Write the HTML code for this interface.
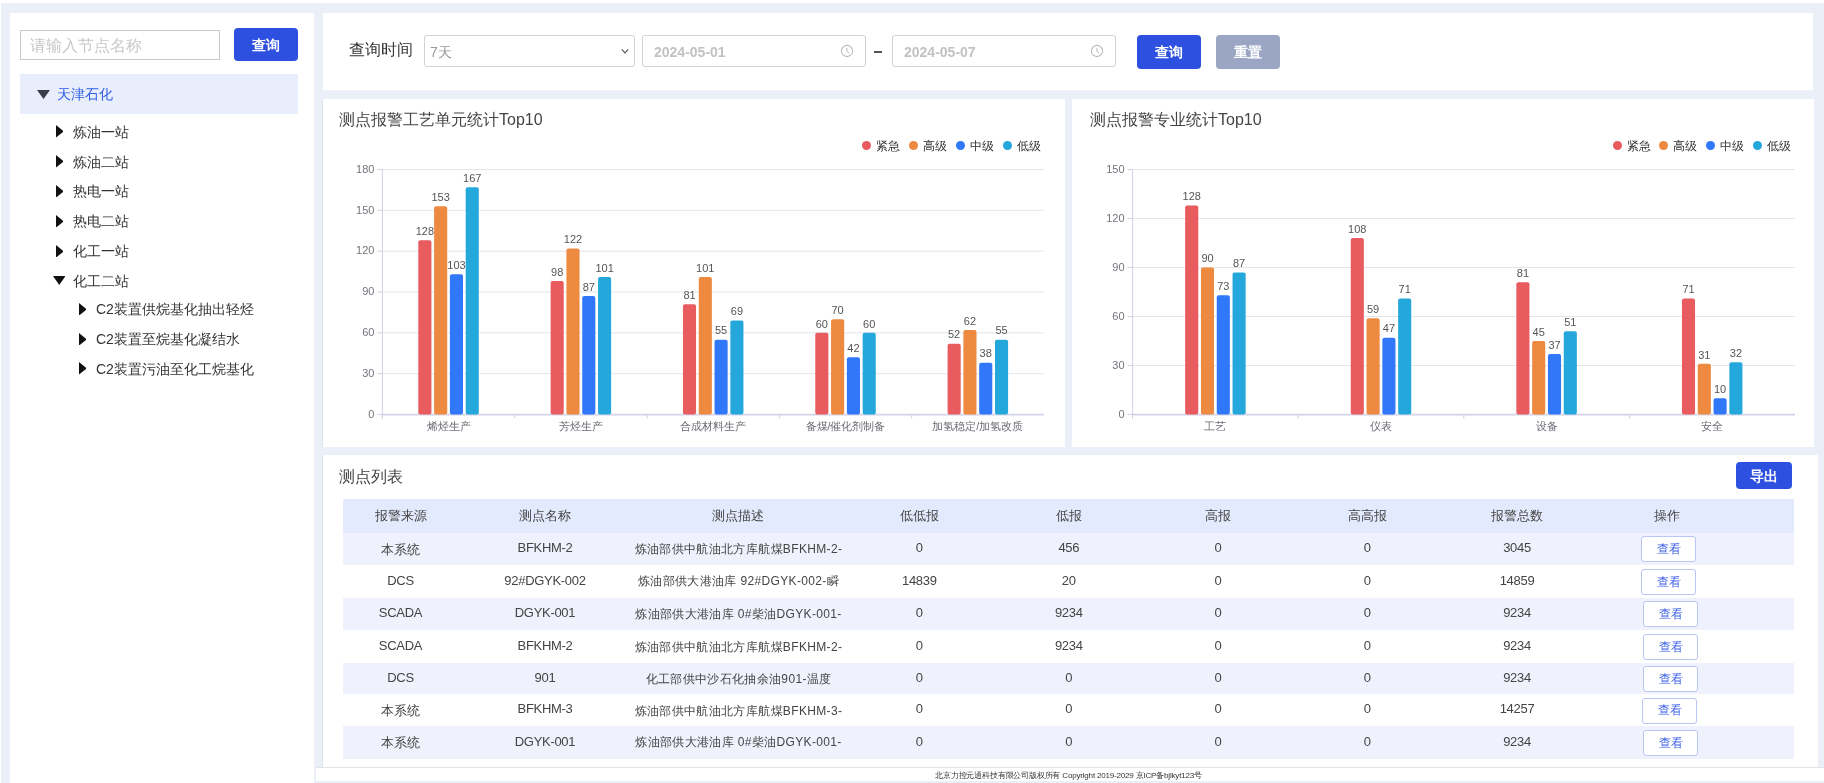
<!DOCTYPE html>
<html><head><meta charset="utf-8"><style>
html,body{margin:0;padding:0;}
body{width:1824px;height:783px;overflow:hidden;position:relative;background:#eaeff8;font-family:"Liberation Sans", sans-serif;}
svg text{font-family:"Liberation Sans", sans-serif;}
</style></head><body><div style="position:absolute;left:0;top:0;width:1824px;height:783px;will-change:transform">
<div style="position:absolute;left:0px;top:0px;width:1824px;height:3px;background:#fff"></div><div style="position:absolute;left:0px;top:0px;width:1px;height:783px;background:#fff"></div><div style="position:absolute;left:322px;top:99px;width:1px;height:348px;background:#e0e5ed"></div><div style="position:absolute;left:322px;top:454.5px;width:1px;height:312.5px;background:#e0e5ed"></div><div style="position:absolute;left:10px;top:13px;width:304px;height:770px;background:#fff"></div><div style="position:absolute;left:20px;top:30px;width:200px;height:30px;border:1px solid #c9c9c9;box-sizing:border-box;background:#fff"></div><div style="position:absolute;left:30px;top:34.80px;font-size:16px;line-height:22.4px;color:#c8c8c8;white-space:nowrap;">请输入节点名称</div><div style="position:absolute;left:234px;top:28px;width:64px;height:33px;background:#2d50e0;border-radius:4px"></div><div style="position:absolute;left:-34px;top:35.70px;width:600px;text-align:center;font-size:14px;line-height:19.599999999999998px;color:#fff;white-space:nowrap;font-weight:bold">查询</div><div style="position:absolute;left:20px;top:74px;width:278px;height:40px;background:#e8eefb"></div><svg style="position:absolute;left:37px;top:90px" width="13" height="9"><polygon points="0,0 13,0 6.5,9" fill="#3a3d45"/></svg><div style="position:absolute;left:56.7px;top:85.20px;font-size:14px;line-height:19.599999999999998px;color:#2f5ce6;white-space:nowrap;">天津石化</div><svg style="position:absolute;left:55.7px;top:125.2px" width="7.8" height="12.6"><polygon points="0,0 7.8,6.3 0,12.6" fill="#111"/></svg><div style="position:absolute;left:72.8px;top:122.70px;font-size:14px;line-height:19.599999999999998px;color:#333;white-space:nowrap;">炼油一站</div><svg style="position:absolute;left:55.7px;top:155.04999999999998px" width="7.8" height="12.6"><polygon points="0,0 7.8,6.3 0,12.6" fill="#111"/></svg><div style="position:absolute;left:72.8px;top:152.55px;font-size:14px;line-height:19.599999999999998px;color:#333;white-space:nowrap;">炼油二站</div><svg style="position:absolute;left:55.7px;top:184.89999999999998px" width="7.8" height="12.6"><polygon points="0,0 7.8,6.3 0,12.6" fill="#111"/></svg><div style="position:absolute;left:72.8px;top:182.40px;font-size:14px;line-height:19.599999999999998px;color:#333;white-space:nowrap;">热电一站</div><svg style="position:absolute;left:55.7px;top:214.75px" width="7.8" height="12.6"><polygon points="0,0 7.8,6.3 0,12.6" fill="#111"/></svg><div style="position:absolute;left:72.8px;top:212.25px;font-size:14px;line-height:19.599999999999998px;color:#333;white-space:nowrap;">热电二站</div><svg style="position:absolute;left:55.7px;top:244.6px" width="7.8" height="12.6"><polygon points="0,0 7.8,6.3 0,12.6" fill="#111"/></svg><div style="position:absolute;left:72.8px;top:242.10px;font-size:14px;line-height:19.599999999999998px;color:#333;white-space:nowrap;">化工一站</div><svg style="position:absolute;left:52.5px;top:276.25px" width="12.5" height="9"><polygon points="0,0 12.5,0 6.25,9" fill="#111"/></svg><div style="position:absolute;left:72.8px;top:271.95px;font-size:14px;line-height:19.599999999999998px;color:#333;white-space:nowrap;">化工二站</div><svg style="position:absolute;left:78.7px;top:302.9px" width="7.8" height="12.6"><polygon points="0,0 7.8,6.3 0,12.6" fill="#111"/></svg><div style="position:absolute;left:96px;top:300.40px;font-size:14px;line-height:19.599999999999998px;color:#333;white-space:nowrap;">C2装置供烷基化抽出轻烃</div><svg style="position:absolute;left:78.7px;top:332.5px" width="7.8" height="12.6"><polygon points="0,0 7.8,6.3 0,12.6" fill="#111"/></svg><div style="position:absolute;left:96px;top:330.00px;font-size:14px;line-height:19.599999999999998px;color:#333;white-space:nowrap;">C2装置至烷基化凝结水</div><svg style="position:absolute;left:78.7px;top:362.09999999999997px" width="7.8" height="12.6"><polygon points="0,0 7.8,6.3 0,12.6" fill="#111"/></svg><div style="position:absolute;left:96px;top:359.60px;font-size:14px;line-height:19.599999999999998px;color:#333;white-space:nowrap;">C2装置污油至化工烷基化</div><div style="position:absolute;left:323px;top:13px;width:1490px;height:77px;background:#fff"></div><div style="position:absolute;left:349px;top:39.30px;font-size:16px;line-height:22.4px;color:#333;white-space:nowrap;">查询时间</div><div style="position:absolute;left:424px;top:35px;width:211px;height:32px;border:1px solid #d2d2d2;border-radius:3px;box-sizing:border-box;background:#fff"></div><div style="position:absolute;left:430px;top:42.70px;font-size:14px;line-height:19.599999999999998px;color:#9a9a9a;white-space:nowrap;">7天</div><svg style="position:absolute;left:621px;top:48px" width="8" height="7"><polyline points="0.8,1.4 4,4.8 7.2,1.4" fill="none" stroke="#555" stroke-width="1.2"/></svg><div style="position:absolute;left:642px;top:35px;width:224px;height:32px;border:1px solid #d2d2d2;border-radius:3px;box-sizing:border-box;background:#fff"></div><div style="position:absolute;left:654px;top:42.50px;font-size:14px;line-height:19.599999999999998px;color:#c2c2c2;white-space:nowrap;font-weight:bold">2024-05-01</div><svg style="position:absolute;left:840.4px;top:44.3px" width="14" height="14"><circle cx="7" cy="7" r="5.6" fill="none" stroke="#bdbdbd" stroke-width="1.1"/><polyline points="6.9,3.8 6.9,7.2 9.3,9.2" fill="none" stroke="#bdbdbd" stroke-width="1"/></svg><div style="position:absolute;left:874px;top:51px;width:8px;height:2px;background:#555"></div><div style="position:absolute;left:892px;top:35px;width:224px;height:32px;border:1px solid #d2d2d2;border-radius:3px;box-sizing:border-box;background:#fff"></div><div style="position:absolute;left:904px;top:42.50px;font-size:14px;line-height:19.599999999999998px;color:#c2c2c2;white-space:nowrap;font-weight:bold">2024-05-07</div><svg style="position:absolute;left:1090.3px;top:44.3px" width="14" height="14"><circle cx="7" cy="7" r="5.6" fill="none" stroke="#bdbdbd" stroke-width="1.1"/><polyline points="6.9,3.8 6.9,7.2 9.3,9.2" fill="none" stroke="#bdbdbd" stroke-width="1"/></svg><div style="position:absolute;left:1137px;top:35px;width:64px;height:34px;background:#2d50e0;border-radius:4px"></div><div style="position:absolute;left:869px;top:43.20px;width:600px;text-align:center;font-size:14px;line-height:19.599999999999998px;color:#fff;white-space:nowrap;font-weight:bold">查询</div><div style="position:absolute;left:1216px;top:35px;width:64px;height:34px;background:#9aa6c3;border-radius:4px"></div><div style="position:absolute;left:948px;top:43.20px;width:600px;text-align:center;font-size:14px;line-height:19.599999999999998px;color:#fff;white-space:nowrap;font-weight:bold">重置</div><div style="position:absolute;left:323px;top:99px;width:742px;height:348px;background:#fff"></div><div style="position:absolute;left:339px;top:109.30px;font-size:16px;line-height:22.4px;color:#444;white-space:nowrap;">测点报警工艺单元统计Top10</div><div style="position:absolute;left:862.4px;top:140.5px;width:9px;height:9px;border-radius:50%;background:#e85b5f"></div><div style="position:absolute;left:876.4px;top:137.80px;font-size:12px;line-height:16.799999999999997px;color:#333;white-space:nowrap;">紧急</div><div style="position:absolute;left:909.1px;top:140.5px;width:9px;height:9px;border-radius:50%;background:#ee8a3f"></div><div style="position:absolute;left:923.1px;top:137.80px;font-size:12px;line-height:16.799999999999997px;color:#333;white-space:nowrap;">高级</div><div style="position:absolute;left:955.8px;top:140.5px;width:9px;height:9px;border-radius:50%;background:#3177fa"></div><div style="position:absolute;left:969.8px;top:137.80px;font-size:12px;line-height:16.799999999999997px;color:#333;white-space:nowrap;">中级</div><div style="position:absolute;left:1002.5px;top:140.5px;width:9px;height:9px;border-radius:50%;background:#24a8dc"></div><div style="position:absolute;left:1016.5px;top:137.80px;font-size:12px;line-height:16.799999999999997px;color:#333;white-space:nowrap;">低级</div><svg style="position:absolute;left:0;top:0" width="1824" height="783"><line x1="377.4" y1="414.50" x2="382.4" y2="414.50" stroke="#cfd0e6" stroke-width="1"/><text x="374.4" y="417.80" text-anchor="end" font-size="11" fill="#74757d">0</text><line x1="382.4" y1="373.67" x2="1044" y2="373.67" stroke="#e4e5ea" stroke-width="1"/><line x1="377.4" y1="373.67" x2="382.4" y2="373.67" stroke="#cfd0e6" stroke-width="1"/><text x="374.4" y="376.97" text-anchor="end" font-size="11" fill="#74757d">30</text><line x1="382.4" y1="332.83" x2="1044" y2="332.83" stroke="#e4e5ea" stroke-width="1"/><line x1="377.4" y1="332.83" x2="382.4" y2="332.83" stroke="#cfd0e6" stroke-width="1"/><text x="374.4" y="336.13" text-anchor="end" font-size="11" fill="#74757d">60</text><line x1="382.4" y1="292.00" x2="1044" y2="292.00" stroke="#e4e5ea" stroke-width="1"/><line x1="377.4" y1="292.00" x2="382.4" y2="292.00" stroke="#cfd0e6" stroke-width="1"/><text x="374.4" y="295.30" text-anchor="end" font-size="11" fill="#74757d">90</text><line x1="382.4" y1="251.17" x2="1044" y2="251.17" stroke="#e4e5ea" stroke-width="1"/><line x1="377.4" y1="251.17" x2="382.4" y2="251.17" stroke="#cfd0e6" stroke-width="1"/><text x="374.4" y="254.47" text-anchor="end" font-size="11" fill="#74757d">120</text><line x1="382.4" y1="210.33" x2="1044" y2="210.33" stroke="#e4e5ea" stroke-width="1"/><line x1="377.4" y1="210.33" x2="382.4" y2="210.33" stroke="#cfd0e6" stroke-width="1"/><text x="374.4" y="213.63" text-anchor="end" font-size="11" fill="#74757d">150</text><line x1="382.4" y1="169.50" x2="1044" y2="169.50" stroke="#e4e5ea" stroke-width="1"/><line x1="377.4" y1="169.50" x2="382.4" y2="169.50" stroke="#cfd0e6" stroke-width="1"/><text x="374.4" y="172.80" text-anchor="end" font-size="11" fill="#74757d">180</text><line x1="382.4" y1="169.5" x2="382.4" y2="418.5" stroke="#cfd0e6" stroke-width="1"/><line x1="382.4" y1="414.6" x2="1044" y2="414.6" stroke="#d2d3e6" stroke-width="1.6"/><line x1="382.40" y1="414.5" x2="382.40" y2="418.5" stroke="#cfd0e6" stroke-width="1"/><line x1="514.72" y1="414.5" x2="514.72" y2="418.5" stroke="#cfd0e6" stroke-width="1"/><line x1="647.04" y1="414.5" x2="647.04" y2="418.5" stroke="#cfd0e6" stroke-width="1"/><line x1="779.36" y1="414.5" x2="779.36" y2="418.5" stroke="#cfd0e6" stroke-width="1"/><line x1="911.68" y1="414.5" x2="911.68" y2="418.5" stroke="#cfd0e6" stroke-width="1"/><text x="448.56" y="430.3" text-anchor="middle" font-size="10.6" fill="#6a6b74">烯烃生产</text><rect x="418.31" y="240.28" width="13.1" height="174.22" rx="2" ry="2" fill="#e85b5f"/><text x="424.86" y="234.98" text-anchor="middle" font-size="11" fill="#555">128</text><rect x="434.11" y="206.25" width="13.1" height="208.25" rx="2" ry="2" fill="#ee8a3f"/><text x="440.66" y="200.95" text-anchor="middle" font-size="11" fill="#555">153</text><rect x="449.91" y="274.31" width="13.1" height="140.19" rx="2" ry="2" fill="#3177fa"/><text x="456.46" y="269.01" text-anchor="middle" font-size="11" fill="#555">103</text><rect x="465.71" y="187.19" width="13.1" height="227.31" rx="2" ry="2" fill="#24a8dc"/><text x="472.26" y="181.89" text-anchor="middle" font-size="11" fill="#555">167</text><text x="580.88" y="430.3" text-anchor="middle" font-size="10.6" fill="#6a6b74">芳烃生产</text><rect x="550.63" y="281.11" width="13.1" height="133.39" rx="2" ry="2" fill="#e85b5f"/><text x="557.18" y="275.81" text-anchor="middle" font-size="11" fill="#555">98</text><rect x="566.43" y="248.44" width="13.1" height="166.06" rx="2" ry="2" fill="#ee8a3f"/><text x="572.98" y="243.14" text-anchor="middle" font-size="11" fill="#555">122</text><rect x="582.23" y="296.08" width="13.1" height="118.42" rx="2" ry="2" fill="#3177fa"/><text x="588.78" y="290.78" text-anchor="middle" font-size="11" fill="#555">87</text><rect x="598.03" y="277.03" width="13.1" height="137.47" rx="2" ry="2" fill="#24a8dc"/><text x="604.58" y="271.73" text-anchor="middle" font-size="11" fill="#555">101</text><text x="713.20" y="430.3" text-anchor="middle" font-size="10.6" fill="#6a6b74">合成材料生产</text><rect x="682.95" y="304.25" width="13.1" height="110.25" rx="2" ry="2" fill="#e85b5f"/><text x="689.50" y="298.95" text-anchor="middle" font-size="11" fill="#555">81</text><rect x="698.75" y="277.03" width="13.1" height="137.47" rx="2" ry="2" fill="#ee8a3f"/><text x="705.30" y="271.73" text-anchor="middle" font-size="11" fill="#555">101</text><rect x="714.55" y="339.64" width="13.1" height="74.86" rx="2" ry="2" fill="#3177fa"/><text x="721.10" y="334.34" text-anchor="middle" font-size="11" fill="#555">55</text><rect x="730.35" y="320.58" width="13.1" height="93.92" rx="2" ry="2" fill="#24a8dc"/><text x="736.90" y="315.28" text-anchor="middle" font-size="11" fill="#555">69</text><text x="845.52" y="430.3" text-anchor="middle" font-size="10.6" fill="#6a6b74">备煤/催化剂制备</text><rect x="815.27" y="332.83" width="13.1" height="81.67" rx="2" ry="2" fill="#e85b5f"/><text x="821.82" y="327.53" text-anchor="middle" font-size="11" fill="#555">60</text><rect x="831.07" y="319.22" width="13.1" height="95.28" rx="2" ry="2" fill="#ee8a3f"/><text x="837.62" y="313.92" text-anchor="middle" font-size="11" fill="#555">70</text><rect x="846.87" y="357.33" width="13.1" height="57.17" rx="2" ry="2" fill="#3177fa"/><text x="853.42" y="352.03" text-anchor="middle" font-size="11" fill="#555">42</text><rect x="862.67" y="332.83" width="13.1" height="81.67" rx="2" ry="2" fill="#24a8dc"/><text x="869.22" y="327.53" text-anchor="middle" font-size="11" fill="#555">60</text><text x="977.84" y="430.3" text-anchor="middle" font-size="10.6" fill="#6a6b74">加氢稳定/加氢改质</text><rect x="947.59" y="343.72" width="13.1" height="70.78" rx="2" ry="2" fill="#e85b5f"/><text x="954.14" y="338.42" text-anchor="middle" font-size="11" fill="#555">52</text><rect x="963.39" y="330.11" width="13.1" height="84.39" rx="2" ry="2" fill="#ee8a3f"/><text x="969.94" y="324.81" text-anchor="middle" font-size="11" fill="#555">62</text><rect x="979.19" y="362.78" width="13.1" height="51.72" rx="2" ry="2" fill="#3177fa"/><text x="985.74" y="357.48" text-anchor="middle" font-size="11" fill="#555">38</text><rect x="994.99" y="339.64" width="13.1" height="74.86" rx="2" ry="2" fill="#24a8dc"/><text x="1001.54" y="334.34" text-anchor="middle" font-size="11" fill="#555">55</text></svg><div style="position:absolute;left:1072px;top:99px;width:742px;height:348px;background:#fff"></div><div style="position:absolute;left:1090px;top:109.30px;font-size:16px;line-height:22.4px;color:#444;white-space:nowrap;">测点报警专业统计Top10</div><div style="position:absolute;left:1612.5px;top:140.5px;width:9px;height:9px;border-radius:50%;background:#e85b5f"></div><div style="position:absolute;left:1626.5px;top:137.80px;font-size:12px;line-height:16.799999999999997px;color:#333;white-space:nowrap;">紧急</div><div style="position:absolute;left:1659.2px;top:140.5px;width:9px;height:9px;border-radius:50%;background:#ee8a3f"></div><div style="position:absolute;left:1673.2px;top:137.80px;font-size:12px;line-height:16.799999999999997px;color:#333;white-space:nowrap;">高级</div><div style="position:absolute;left:1705.9px;top:140.5px;width:9px;height:9px;border-radius:50%;background:#3177fa"></div><div style="position:absolute;left:1719.9px;top:137.80px;font-size:12px;line-height:16.799999999999997px;color:#333;white-space:nowrap;">中级</div><div style="position:absolute;left:1752.6px;top:140.5px;width:9px;height:9px;border-radius:50%;background:#24a8dc"></div><div style="position:absolute;left:1766.6px;top:137.80px;font-size:12px;line-height:16.799999999999997px;color:#333;white-space:nowrap;">低级</div><svg style="position:absolute;left:0;top:0" width="1824" height="783"><line x1="1127.6" y1="414.50" x2="1132.6" y2="414.50" stroke="#cfd0e6" stroke-width="1"/><text x="1124.6" y="417.80" text-anchor="end" font-size="11" fill="#74757d">0</text><line x1="1132.6" y1="365.50" x2="1795" y2="365.50" stroke="#e4e5ea" stroke-width="1"/><line x1="1127.6" y1="365.50" x2="1132.6" y2="365.50" stroke="#cfd0e6" stroke-width="1"/><text x="1124.6" y="368.80" text-anchor="end" font-size="11" fill="#74757d">30</text><line x1="1132.6" y1="316.50" x2="1795" y2="316.50" stroke="#e4e5ea" stroke-width="1"/><line x1="1127.6" y1="316.50" x2="1132.6" y2="316.50" stroke="#cfd0e6" stroke-width="1"/><text x="1124.6" y="319.80" text-anchor="end" font-size="11" fill="#74757d">60</text><line x1="1132.6" y1="267.50" x2="1795" y2="267.50" stroke="#e4e5ea" stroke-width="1"/><line x1="1127.6" y1="267.50" x2="1132.6" y2="267.50" stroke="#cfd0e6" stroke-width="1"/><text x="1124.6" y="270.80" text-anchor="end" font-size="11" fill="#74757d">90</text><line x1="1132.6" y1="218.50" x2="1795" y2="218.50" stroke="#e4e5ea" stroke-width="1"/><line x1="1127.6" y1="218.50" x2="1132.6" y2="218.50" stroke="#cfd0e6" stroke-width="1"/><text x="1124.6" y="221.80" text-anchor="end" font-size="11" fill="#74757d">120</text><line x1="1132.6" y1="169.50" x2="1795" y2="169.50" stroke="#e4e5ea" stroke-width="1"/><line x1="1127.6" y1="169.50" x2="1132.6" y2="169.50" stroke="#cfd0e6" stroke-width="1"/><text x="1124.6" y="172.80" text-anchor="end" font-size="11" fill="#74757d">150</text><line x1="1132.6" y1="169.5" x2="1132.6" y2="418.5" stroke="#cfd0e6" stroke-width="1"/><line x1="1132.6" y1="414.6" x2="1795" y2="414.6" stroke="#d2d3e6" stroke-width="1.6"/><line x1="1132.60" y1="414.5" x2="1132.60" y2="418.5" stroke="#cfd0e6" stroke-width="1"/><line x1="1298.20" y1="414.5" x2="1298.20" y2="418.5" stroke="#cfd0e6" stroke-width="1"/><line x1="1463.80" y1="414.5" x2="1463.80" y2="418.5" stroke="#cfd0e6" stroke-width="1"/><line x1="1629.40" y1="414.5" x2="1629.40" y2="418.5" stroke="#cfd0e6" stroke-width="1"/><text x="1215.40" y="430.3" text-anchor="middle" font-size="10.6" fill="#6a6b74">工艺</text><rect x="1185.15" y="205.43" width="13.1" height="209.07" rx="2" ry="2" fill="#e85b5f"/><text x="1191.70" y="200.13" text-anchor="middle" font-size="11" fill="#555">128</text><rect x="1200.95" y="267.50" width="13.1" height="147.00" rx="2" ry="2" fill="#ee8a3f"/><text x="1207.50" y="262.20" text-anchor="middle" font-size="11" fill="#555">90</text><rect x="1216.75" y="295.27" width="13.1" height="119.23" rx="2" ry="2" fill="#3177fa"/><text x="1223.30" y="289.97" text-anchor="middle" font-size="11" fill="#555">73</text><rect x="1232.55" y="272.40" width="13.1" height="142.10" rx="2" ry="2" fill="#24a8dc"/><text x="1239.10" y="267.10" text-anchor="middle" font-size="11" fill="#555">87</text><text x="1381.00" y="430.3" text-anchor="middle" font-size="10.6" fill="#6a6b74">仪表</text><rect x="1350.75" y="238.10" width="13.1" height="176.40" rx="2" ry="2" fill="#e85b5f"/><text x="1357.30" y="232.80" text-anchor="middle" font-size="11" fill="#555">108</text><rect x="1366.55" y="318.13" width="13.1" height="96.37" rx="2" ry="2" fill="#ee8a3f"/><text x="1373.10" y="312.83" text-anchor="middle" font-size="11" fill="#555">59</text><rect x="1382.35" y="337.73" width="13.1" height="76.77" rx="2" ry="2" fill="#3177fa"/><text x="1388.90" y="332.43" text-anchor="middle" font-size="11" fill="#555">47</text><rect x="1398.15" y="298.53" width="13.1" height="115.97" rx="2" ry="2" fill="#24a8dc"/><text x="1404.70" y="293.23" text-anchor="middle" font-size="11" fill="#555">71</text><text x="1546.60" y="430.3" text-anchor="middle" font-size="10.6" fill="#6a6b74">设备</text><rect x="1516.35" y="282.20" width="13.1" height="132.30" rx="2" ry="2" fill="#e85b5f"/><text x="1522.90" y="276.90" text-anchor="middle" font-size="11" fill="#555">81</text><rect x="1532.15" y="341.00" width="13.1" height="73.50" rx="2" ry="2" fill="#ee8a3f"/><text x="1538.70" y="335.70" text-anchor="middle" font-size="11" fill="#555">45</text><rect x="1547.95" y="354.07" width="13.1" height="60.43" rx="2" ry="2" fill="#3177fa"/><text x="1554.50" y="348.77" text-anchor="middle" font-size="11" fill="#555">37</text><rect x="1563.75" y="331.20" width="13.1" height="83.30" rx="2" ry="2" fill="#24a8dc"/><text x="1570.30" y="325.90" text-anchor="middle" font-size="11" fill="#555">51</text><text x="1712.20" y="430.3" text-anchor="middle" font-size="10.6" fill="#6a6b74">安全</text><rect x="1681.95" y="298.53" width="13.1" height="115.97" rx="2" ry="2" fill="#e85b5f"/><text x="1688.50" y="293.23" text-anchor="middle" font-size="11" fill="#555">71</text><rect x="1697.75" y="363.87" width="13.1" height="50.63" rx="2" ry="2" fill="#ee8a3f"/><text x="1704.30" y="358.57" text-anchor="middle" font-size="11" fill="#555">31</text><rect x="1713.55" y="398.17" width="13.1" height="16.33" rx="2" ry="2" fill="#3177fa"/><text x="1720.10" y="392.87" text-anchor="middle" font-size="11" fill="#555">10</text><rect x="1729.35" y="362.23" width="13.1" height="52.27" rx="2" ry="2" fill="#24a8dc"/><text x="1735.90" y="356.93" text-anchor="middle" font-size="11" fill="#555">32</text></svg><div style="position:absolute;left:323px;top:454.5px;width:1495px;height:312.5px;background:#fff"></div><div style="position:absolute;left:339px;top:466.30px;font-size:16px;line-height:22.4px;color:#444;white-space:nowrap;">测点列表</div><div style="position:absolute;left:1736px;top:462px;width:56px;height:27px;background:#2d50e0;border-radius:4px"></div><div style="position:absolute;left:1464px;top:466.70px;width:600px;text-align:center;font-size:14px;line-height:19.599999999999998px;color:#fff;white-space:nowrap;font-weight:bold">导出</div><div style="position:absolute;left:343px;top:498.5px;width:1451px;height:34px;background:#e4eafd"></div><div style="position:absolute;left:100.5px;top:507.40px;width:600px;text-align:center;font-size:13px;line-height:18.2px;color:#444;white-space:nowrap;">报警来源</div><div style="position:absolute;left:245px;top:507.40px;width:600px;text-align:center;font-size:13px;line-height:18.2px;color:#444;white-space:nowrap;">测点名称</div><div style="position:absolute;left:438px;top:507.40px;width:600px;text-align:center;font-size:13px;line-height:18.2px;color:#444;white-space:nowrap;">测点描述</div><div style="position:absolute;left:619.3px;top:507.40px;width:600px;text-align:center;font-size:13px;line-height:18.2px;color:#444;white-space:nowrap;">低低报</div><div style="position:absolute;left:768.8px;top:507.40px;width:600px;text-align:center;font-size:13px;line-height:18.2px;color:#444;white-space:nowrap;">低报</div><div style="position:absolute;left:918px;top:507.40px;width:600px;text-align:center;font-size:13px;line-height:18.2px;color:#444;white-space:nowrap;">高报</div><div style="position:absolute;left:1067.2px;top:507.40px;width:600px;text-align:center;font-size:13px;line-height:18.2px;color:#444;white-space:nowrap;">高高报</div><div style="position:absolute;left:1217px;top:507.40px;width:600px;text-align:center;font-size:13px;line-height:18.2px;color:#444;white-space:nowrap;">报警总数</div><div style="position:absolute;left:1366.5px;top:507.40px;width:600px;text-align:center;font-size:13px;line-height:18.2px;color:#444;white-space:nowrap;">操作</div><div style="position:absolute;left:343px;top:532.5px;width:1451px;height:32.5px;background:#eff2fd"></div><div style="position:absolute;left:100.5px;top:540.65px;width:600px;text-align:center;font-size:13px;line-height:18.2px;color:#444;white-space:nowrap;">本系统</div><div style="position:absolute;left:245px;top:539.15px;width:600px;text-align:center;font-size:13px;line-height:18.2px;color:#444;white-space:nowrap;letter-spacing:-0.3px">BFKHM-2</div><div style="position:absolute;left:438.5px;top:541.35px;width:600px;text-align:center;font-size:12px;line-height:16.799999999999997px;color:#444;white-space:nowrap;letter-spacing:0.35px">炼油部供中航油北方库航煤BFKHM-2-</div><div style="position:absolute;left:619.3px;top:539.15px;width:600px;text-align:center;font-size:13px;line-height:18.2px;color:#444;white-space:nowrap;letter-spacing:-0.3px">0</div><div style="position:absolute;left:768.8px;top:539.15px;width:600px;text-align:center;font-size:13px;line-height:18.2px;color:#444;white-space:nowrap;letter-spacing:-0.3px">456</div><div style="position:absolute;left:918px;top:539.15px;width:600px;text-align:center;font-size:13px;line-height:18.2px;color:#444;white-space:nowrap;letter-spacing:-0.3px">0</div><div style="position:absolute;left:1067.2px;top:539.15px;width:600px;text-align:center;font-size:13px;line-height:18.2px;color:#444;white-space:nowrap;letter-spacing:-0.3px">0</div><div style="position:absolute;left:1217px;top:539.15px;width:600px;text-align:center;font-size:13px;line-height:18.2px;color:#444;white-space:nowrap;letter-spacing:-0.3px">3045</div><div style="position:absolute;left:1641px;top:536.25px;width:55px;height:26px;border:1px solid #b9c5f3;border-radius:3px;box-sizing:border-box;background:#fff"></div><div style="position:absolute;left:1368.5px;top:541.05px;width:600px;text-align:center;font-size:12px;line-height:16.799999999999997px;color:#3a5ee6;white-space:nowrap;font-weight:500">查看</div><div style="position:absolute;left:100.5px;top:571.65px;width:600px;text-align:center;font-size:13px;line-height:18.2px;color:#444;white-space:nowrap;letter-spacing:-0.3px">DCS</div><div style="position:absolute;left:245px;top:571.65px;width:600px;text-align:center;font-size:13px;line-height:18.2px;color:#444;white-space:nowrap;letter-spacing:-0.3px">92#DGYK-002</div><div style="position:absolute;left:438.5px;top:573.35px;width:600px;text-align:center;font-size:12px;line-height:16.799999999999997px;color:#444;white-space:nowrap;letter-spacing:0.35px">炼油部供大港油库 92#DGYK-002-瞬</div><div style="position:absolute;left:619.3px;top:571.65px;width:600px;text-align:center;font-size:13px;line-height:18.2px;color:#444;white-space:nowrap;letter-spacing:-0.3px">14839</div><div style="position:absolute;left:768.8px;top:571.65px;width:600px;text-align:center;font-size:13px;line-height:18.2px;color:#444;white-space:nowrap;letter-spacing:-0.3px">20</div><div style="position:absolute;left:918px;top:571.65px;width:600px;text-align:center;font-size:13px;line-height:18.2px;color:#444;white-space:nowrap;letter-spacing:-0.3px">0</div><div style="position:absolute;left:1067.2px;top:571.65px;width:600px;text-align:center;font-size:13px;line-height:18.2px;color:#444;white-space:nowrap;letter-spacing:-0.3px">0</div><div style="position:absolute;left:1217px;top:571.65px;width:600px;text-align:center;font-size:13px;line-height:18.2px;color:#444;white-space:nowrap;letter-spacing:-0.3px">14859</div><div style="position:absolute;left:1641px;top:568.75px;width:55px;height:26px;border:1px solid #b9c5f3;border-radius:3px;box-sizing:border-box;background:#fff"></div><div style="position:absolute;left:1368.5px;top:573.55px;width:600px;text-align:center;font-size:12px;line-height:16.799999999999997px;color:#3a5ee6;white-space:nowrap;font-weight:500">查看</div><div style="position:absolute;left:343px;top:597.5px;width:1451px;height:32.5px;background:#eff2fd"></div><div style="position:absolute;left:100.5px;top:604.15px;width:600px;text-align:center;font-size:13px;line-height:18.2px;color:#444;white-space:nowrap;letter-spacing:-0.3px">SCADA</div><div style="position:absolute;left:245px;top:604.15px;width:600px;text-align:center;font-size:13px;line-height:18.2px;color:#444;white-space:nowrap;letter-spacing:-0.3px">DGYK-001</div><div style="position:absolute;left:438.5px;top:605.85px;width:600px;text-align:center;font-size:12px;line-height:16.799999999999997px;color:#444;white-space:nowrap;letter-spacing:0.35px">炼油部供大港油库 0#柴油DGYK-001-</div><div style="position:absolute;left:619.3px;top:604.15px;width:600px;text-align:center;font-size:13px;line-height:18.2px;color:#444;white-space:nowrap;letter-spacing:-0.3px">0</div><div style="position:absolute;left:768.8px;top:604.15px;width:600px;text-align:center;font-size:13px;line-height:18.2px;color:#444;white-space:nowrap;letter-spacing:-0.3px">9234</div><div style="position:absolute;left:918px;top:604.15px;width:600px;text-align:center;font-size:13px;line-height:18.2px;color:#444;white-space:nowrap;letter-spacing:-0.3px">0</div><div style="position:absolute;left:1067.2px;top:604.15px;width:600px;text-align:center;font-size:13px;line-height:18.2px;color:#444;white-space:nowrap;letter-spacing:-0.3px">0</div><div style="position:absolute;left:1217px;top:604.15px;width:600px;text-align:center;font-size:13px;line-height:18.2px;color:#444;white-space:nowrap;letter-spacing:-0.3px">9234</div><div style="position:absolute;left:1643px;top:601.25px;width:55px;height:26px;border:1px solid #b9c5f3;border-radius:3px;box-sizing:border-box;background:#fff"></div><div style="position:absolute;left:1370.5px;top:606.05px;width:600px;text-align:center;font-size:12px;line-height:16.799999999999997px;color:#3a5ee6;white-space:nowrap;font-weight:500">查看</div><div style="position:absolute;left:100.5px;top:636.65px;width:600px;text-align:center;font-size:13px;line-height:18.2px;color:#444;white-space:nowrap;letter-spacing:-0.3px">SCADA</div><div style="position:absolute;left:245px;top:636.65px;width:600px;text-align:center;font-size:13px;line-height:18.2px;color:#444;white-space:nowrap;letter-spacing:-0.3px">BFKHM-2</div><div style="position:absolute;left:438.5px;top:638.85px;width:600px;text-align:center;font-size:12px;line-height:16.799999999999997px;color:#444;white-space:nowrap;letter-spacing:0.35px">炼油部供中航油北方库航煤BFKHM-2-</div><div style="position:absolute;left:619.3px;top:636.65px;width:600px;text-align:center;font-size:13px;line-height:18.2px;color:#444;white-space:nowrap;letter-spacing:-0.3px">0</div><div style="position:absolute;left:768.8px;top:636.65px;width:600px;text-align:center;font-size:13px;line-height:18.2px;color:#444;white-space:nowrap;letter-spacing:-0.3px">9234</div><div style="position:absolute;left:918px;top:636.65px;width:600px;text-align:center;font-size:13px;line-height:18.2px;color:#444;white-space:nowrap;letter-spacing:-0.3px">0</div><div style="position:absolute;left:1067.2px;top:636.65px;width:600px;text-align:center;font-size:13px;line-height:18.2px;color:#444;white-space:nowrap;letter-spacing:-0.3px">0</div><div style="position:absolute;left:1217px;top:636.65px;width:600px;text-align:center;font-size:13px;line-height:18.2px;color:#444;white-space:nowrap;letter-spacing:-0.3px">9234</div><div style="position:absolute;left:1643px;top:633.75px;width:55px;height:26px;border:1px solid #b9c5f3;border-radius:3px;box-sizing:border-box;background:#fff"></div><div style="position:absolute;left:1370.5px;top:638.55px;width:600px;text-align:center;font-size:12px;line-height:16.799999999999997px;color:#3a5ee6;white-space:nowrap;font-weight:500">查看</div><div style="position:absolute;left:343px;top:662.5px;width:1451px;height:31.5px;background:#eff2fd"></div><div style="position:absolute;left:100.5px;top:668.65px;width:600px;text-align:center;font-size:13px;line-height:18.2px;color:#444;white-space:nowrap;letter-spacing:-0.3px">DCS</div><div style="position:absolute;left:245px;top:668.65px;width:600px;text-align:center;font-size:13px;line-height:18.2px;color:#444;white-space:nowrap;letter-spacing:-0.3px">901</div><div style="position:absolute;left:438.5px;top:670.85px;width:600px;text-align:center;font-size:12px;line-height:16.799999999999997px;color:#444;white-space:nowrap;letter-spacing:0.35px">化工部供中沙石化抽余油901-温度</div><div style="position:absolute;left:619.3px;top:668.65px;width:600px;text-align:center;font-size:13px;line-height:18.2px;color:#444;white-space:nowrap;letter-spacing:-0.3px">0</div><div style="position:absolute;left:768.8px;top:668.65px;width:600px;text-align:center;font-size:13px;line-height:18.2px;color:#444;white-space:nowrap;letter-spacing:-0.3px">0</div><div style="position:absolute;left:918px;top:668.65px;width:600px;text-align:center;font-size:13px;line-height:18.2px;color:#444;white-space:nowrap;letter-spacing:-0.3px">0</div><div style="position:absolute;left:1067.2px;top:668.65px;width:600px;text-align:center;font-size:13px;line-height:18.2px;color:#444;white-space:nowrap;letter-spacing:-0.3px">0</div><div style="position:absolute;left:1217px;top:668.65px;width:600px;text-align:center;font-size:13px;line-height:18.2px;color:#444;white-space:nowrap;letter-spacing:-0.3px">9234</div><div style="position:absolute;left:1643px;top:665.75px;width:55px;height:26px;border:1px solid #b9c5f3;border-radius:3px;box-sizing:border-box;background:#fff"></div><div style="position:absolute;left:1370.5px;top:670.55px;width:600px;text-align:center;font-size:12px;line-height:16.799999999999997px;color:#3a5ee6;white-space:nowrap;font-weight:500">查看</div><div style="position:absolute;left:100.5px;top:701.90px;width:600px;text-align:center;font-size:13px;line-height:18.2px;color:#444;white-space:nowrap;">本系统</div><div style="position:absolute;left:245px;top:700.40px;width:600px;text-align:center;font-size:13px;line-height:18.2px;color:#444;white-space:nowrap;letter-spacing:-0.3px">BFKHM-3</div><div style="position:absolute;left:438.5px;top:702.60px;width:600px;text-align:center;font-size:12px;line-height:16.799999999999997px;color:#444;white-space:nowrap;letter-spacing:0.35px">炼油部供中航油北方库航煤BFKHM-3-</div><div style="position:absolute;left:619.3px;top:700.40px;width:600px;text-align:center;font-size:13px;line-height:18.2px;color:#444;white-space:nowrap;letter-spacing:-0.3px">0</div><div style="position:absolute;left:768.8px;top:700.40px;width:600px;text-align:center;font-size:13px;line-height:18.2px;color:#444;white-space:nowrap;letter-spacing:-0.3px">0</div><div style="position:absolute;left:918px;top:700.40px;width:600px;text-align:center;font-size:13px;line-height:18.2px;color:#444;white-space:nowrap;letter-spacing:-0.3px">0</div><div style="position:absolute;left:1067.2px;top:700.40px;width:600px;text-align:center;font-size:13px;line-height:18.2px;color:#444;white-space:nowrap;letter-spacing:-0.3px">0</div><div style="position:absolute;left:1217px;top:700.40px;width:600px;text-align:center;font-size:13px;line-height:18.2px;color:#444;white-space:nowrap;letter-spacing:-0.3px">14257</div><div style="position:absolute;left:1642px;top:697.5px;width:55px;height:26px;border:1px solid #b9c5f3;border-radius:3px;box-sizing:border-box;background:#fff"></div><div style="position:absolute;left:1369.5px;top:702.30px;width:600px;text-align:center;font-size:12px;line-height:16.799999999999997px;color:#3a5ee6;white-space:nowrap;font-weight:500">查看</div><div style="position:absolute;left:343px;top:726px;width:1451px;height:32.5px;background:#eff2fd"></div><div style="position:absolute;left:100.5px;top:734.15px;width:600px;text-align:center;font-size:13px;line-height:18.2px;color:#444;white-space:nowrap;">本系统</div><div style="position:absolute;left:245px;top:732.65px;width:600px;text-align:center;font-size:13px;line-height:18.2px;color:#444;white-space:nowrap;letter-spacing:-0.3px">DGYK-001</div><div style="position:absolute;left:438.5px;top:734.35px;width:600px;text-align:center;font-size:12px;line-height:16.799999999999997px;color:#444;white-space:nowrap;letter-spacing:0.35px">炼油部供大港油库 0#柴油DGYK-001-</div><div style="position:absolute;left:619.3px;top:732.65px;width:600px;text-align:center;font-size:13px;line-height:18.2px;color:#444;white-space:nowrap;letter-spacing:-0.3px">0</div><div style="position:absolute;left:768.8px;top:732.65px;width:600px;text-align:center;font-size:13px;line-height:18.2px;color:#444;white-space:nowrap;letter-spacing:-0.3px">0</div><div style="position:absolute;left:918px;top:732.65px;width:600px;text-align:center;font-size:13px;line-height:18.2px;color:#444;white-space:nowrap;letter-spacing:-0.3px">0</div><div style="position:absolute;left:1067.2px;top:732.65px;width:600px;text-align:center;font-size:13px;line-height:18.2px;color:#444;white-space:nowrap;letter-spacing:-0.3px">0</div><div style="position:absolute;left:1217px;top:732.65px;width:600px;text-align:center;font-size:13px;line-height:18.2px;color:#444;white-space:nowrap;letter-spacing:-0.3px">9234</div><div style="position:absolute;left:1643px;top:729.75px;width:55px;height:26px;border:1px solid #b9c5f3;border-radius:3px;box-sizing:border-box;background:#fff"></div><div style="position:absolute;left:1370.5px;top:734.55px;width:600px;text-align:center;font-size:12px;line-height:16.799999999999997px;color:#3a5ee6;white-space:nowrap;font-weight:500">查看</div><div style="position:absolute;left:316px;top:767px;width:1508px;height:1px;background:#dfe3ea"></div><div style="position:absolute;left:316px;top:768px;width:1508px;height:13px;background:#fff"></div><div style="position:absolute;left:768.5px;top:770.40px;width:600px;text-align:center;font-size:8px;line-height:11.2px;color:#333;white-space:nowrap;letter-spacing:-0.18px">北京力控元通科技有限公司版权所有 Copyright 2019-2029 京ICP备bjlkyt123号</div></div>
</body></html>
